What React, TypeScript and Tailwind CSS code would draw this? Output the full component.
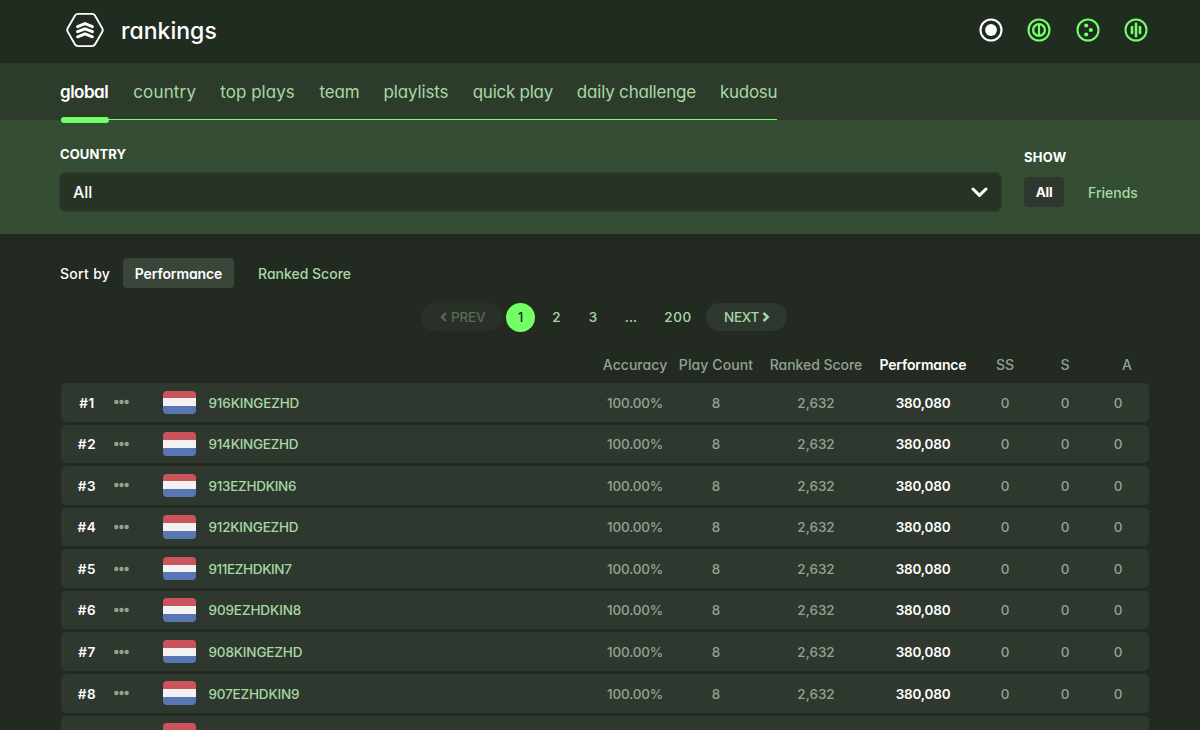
import type { ReactNode } from "react";

const tabs: { label: string; cls: string }[] = [
  { label: "global", cls: "w-[49px] text-white font-semibold tracking-[-0.5px]" },
  { label: "country", cls: "w-[63px] tracking-[0.18px]" },
  { label: "top plays", cls: "w-[75px] tracking-[0.02px]" },
  { label: "team", cls: "w-[40px] tracking-[-0.15px]" },
  { label: "playlists", cls: "w-[65px] tracking-[-0.16px]" },
  { label: "quick play", cls: "w-[80px] tracking-[-0.26px]" },
  { label: "daily challenge", cls: "w-[119px] tracking-[-0.2px]" },
  { label: "kudosu", cls: "w-[57px] tracking-[-0.3px]" },
];

const players: { name: string; cls: string }[] = [
  { name: "916KINGEZHD", cls: "tracking-[-0.16px]" },
  { name: "914KINGEZHD", cls: "tracking-[-0.27px]" },
  { name: "913EZHDKIN6", cls: "tracking-[-0.28px]" },
  { name: "912KINGEZHD", cls: "tracking-[-0.22px]" },
  { name: "911EZHDKIN7", cls: "tracking-[-0.38px]" },
  { name: "909EZHDKIN8", cls: "tracking-[-0.12px]" },
  { name: "908KINGEZHD", cls: "tracking-[-0.16px]" },
  { name: "907EZHDKIN9", cls: "tracking-[-0.19px]" },
];

const columns =
  "grid grid-cols-[52px_50px_435px_74px_88px_112px_102px_62px_58px_48px_6px] w-[1088px] items-center";

function Logo() {
  return (
    <svg width="38" height="36" viewBox="0 0 38 36" fill="none" stroke="#fff" strokeLinejoin="miter">
      <path
        d="M12.2 1.9H25.8Q28 1.9 29.1 3.8L36.2 16.1Q37.3 18 36.2 19.9L29.1 32.2Q28 34.1 25.8 34.1H12.2Q10 34.1 8.9 32.2L1.8 19.9Q.7 18 1.8 16.1L8.9 3.8Q10 1.9 12.2 1.9Z"
        strokeWidth="1.9"
      />
      <path
        d="M11.6 14.6L19 11.7L26.4 14.6M11.6 19.7L19 16.8L26.4 19.7M11.6 24.8L19 21.9L26.4 24.8"
        strokeWidth="3"
        strokeLinecap="round"
      />
    </svg>
  );
}

function Mode({ color, children }: { color: string; children: ReactNode }) {
  return (
    <svg width="24" height="24" viewBox="0 0 24 24" fill={color} stroke={color}>
      <circle cx="12" cy="12" r="10.5" fill="none" strokeWidth="2.1" />
      {children}
    </svg>
  );
}

function Flag() {
  return (
    <div className="flex h-[23.5px] w-[33px] flex-col overflow-hidden rounded-[4px]">
      <div className="flex-1 bg-[#cb535b]" />
      <div className="flex-1 bg-[#f2f2f2]" />
      <div className="flex-1 bg-[#5876b3]" />
    </div>
  );
}

function Row({ rank, name, cls }: { rank: number; name: string; cls: string }) {
  return (
    <div className={`${columns} h-[38.57px] shrink-0 rounded-[5px] bg-[#2f382f] text-center text-[13.5px] font-medium text-[#91a38f]`}>
      <div className="pt-px font-semibold tracking-[0.6px] text-white">#{rank}</div>
      <svg width="17" height="6" viewBox="0 0 17 6" fill="#91a38f">
        <circle cx="3.3" cy="3" r="2.2" />
        <circle cx="8.5" cy="3" r="2.2" />
        <circle cx="13.7" cy="3" r="2.2" />
      </svg>
      <div className="flex items-center gap-[12.5px]">
        <Flag />
        <span className={`pt-px text-[#a6d9a3] ${cls}`}>{name}</span>
      </div>
      <div className="pt-px tracking-[-0.2px]">100.00%</div>
      <div className="pt-px">8</div>
      <div className="pt-px">2,632</div>
      <div className="pt-px font-semibold tracking-[-0.2px] text-white">380,080</div>
      <div className="pt-px">0</div>
      <div className="pt-px">0</div>
      <div className="pt-px">0</div>
    </div>
  );
}

export default function App() {
  return (
    <div className="flex h-[730px] w-[1200px] flex-col overflow-hidden bg-[#232a22] text-white [font-family:Inter,'Liberation_Sans',sans-serif] [font-feature-settings:'cv11']">
      <header className="flex h-[63px] shrink-0 items-center justify-between bg-[#212c21] pr-[52px] pb-[3px] pl-[66px]">
        <div className="flex items-center gap-[17px]">
          <Logo />
          <h1 className="pt-px text-[23px] leading-8 font-[450] tracking-[0.02px]">rankings</h1>
        </div>
        <div className="flex gap-[24.3px] pb-px">
          <Mode color="#ffffff">
            <circle cx="12" cy="12" r="5.9" stroke="none" />
          </Mode>
          <Mode color="#73ff66">
            <circle cx="12" cy="12" r="5.9" fill="none" strokeWidth="2.4" />
            <path d="M12 6.5V17.5" strokeWidth="2.2" />
          </Mode>
          <Mode color="#73ff66">
            <circle cx="10.2" cy="7.5" r="2.1" stroke="none" />
            <circle cx="14.8" cy="12" r="2.1" stroke="none" />
            <circle cx="10.2" cy="16.5" r="2.1" stroke="none" />
          </Mode>
          <Mode color="#73ff66">
            <path d="M12 5.8V18.2M8 9V15M16 9V15" strokeWidth="2.6" strokeLinecap="round" />
          </Mode>
        </div>
      </header>

      <nav className="flex h-[57px] shrink-0 bg-[#2d3b2b] pl-[61px]">
        <div className="relative flex h-[57px] w-[716px] border-b border-[#73ff66] pt-[17px] text-[17px] leading-6 text-[#a6d9a3]">
          <div className="-ml-px flex w-[717px] justify-between">
            {tabs.map((t) => (
              <a key={t.label} className={`whitespace-nowrap ${t.cls}`}>
                {t.label}
              </a>
            ))}
          </div>
          <div className="absolute bottom-[-4px] left-0 h-[6px] w-[48px] rounded-full bg-[#73ff66]" />
        </div>
      </nav>

      <section className="flex h-[114px] shrink-0 bg-[#354d33] pl-[59px]">
        <div className="w-[943px] pt-[24px]">
          <div className="pl-px text-[13px] leading-5 font-bold tracking-[0.1px]">COUNTRY</div>
          <div className="mt-[8px] flex h-[40px] items-center justify-between rounded-[7px] border-2 border-[#2a3a28] bg-[#273325] px-[12px]">
            <span className="text-[16px] font-medium tracking-[-0.1px]">All</span>
            <svg width="17" height="11" viewBox="0 0 17 11" fill="none" stroke="#fff" strokeWidth="3" strokeLinecap="round" strokeLinejoin="round">
              <path d="M2 2L8.5 8.4L15 2" />
            </svg>
          </div>
        </div>
        <div className="pt-[27px] pl-[22px]">
          <div className="text-[13px] leading-5 font-bold tracking-[0.3px]">SHOW</div>
          <div className="mt-[10px] flex h-[30px] items-center gap-6">
            <span className="flex h-[30px] w-[40px] items-center justify-center rounded-[4px] bg-[#2f382f] text-[13.5px] font-bold tracking-[-0.3px]">All</span>
            <span className="text-[14px] font-[450]">
              <span className="text-[#a6d9a3]">Friends</span>
            </span>
          </div>
        </div>
      </section>

      <main className="flex flex-col pl-[61px]">
        <div className="mt-[24px] flex h-[30px] items-center text-[14px]">
          <span className="-ml-px w-[63px] font-medium tracking-[0.3px]">Sort by</span>
          <span className="flex h-[30px] w-[111px] items-center justify-center rounded-[4px] bg-[#3a4639] font-semibold tracking-[-0.1px]">Performance</span>
          <span className="pl-[24px] font-[450] text-[#a6d9a3]">Ranked Score</span>
        </div>

        <div className="mt-[15px] ml-[360px] flex h-[28px] items-center text-[13.5px] font-[450] text-[#a6d9a3]">
          <span className="flex h-[28px] w-[82px] items-center gap-[4px] rounded-full bg-[#283028] pl-[19px] tracking-[-0.2px] text-[#596a57]">
            <svg width="7" height="10" viewBox="0 0 7 10" fill="none" stroke="currentColor" strokeWidth="2.4">
              <path d="M6 1L2 5L6 9" />
            </svg>
            PREV
          </span>
          <span className="ml-[3px] flex size-[29px] items-center justify-center rounded-full bg-[#73ff66] font-medium text-[#232a22]">1</span>
          <span className="w-[43px] text-center">2</span>
          <span className="w-[30px] text-center">3</span>
          <span className="w-[46px] text-center">...</span>
          <span className="w-[48px] text-center tracking-[0.6px]">200</span>
          <span className="ml-[4px] flex h-[28px] w-[81px] items-center gap-[3px] rounded-full bg-[#2f382f] pl-[18px] tracking-[-0.3px]">
            NEXT
            <svg width="8" height="10" viewBox="0 0 8 10" fill="none" stroke="currentColor" strokeWidth="2.4">
              <path d="M1.5 1L5.8 5L1.5 9" />
            </svg>
          </span>
        </div>

        <div className={`${columns} mt-[23px] mb-[8px] h-[21px] text-center text-[14px] font-[450] whitespace-nowrap text-[#91a38f]`}>
          <div className="col-start-4 tracking-[0.05px]">Accuracy</div>
          <div className="tracking-[0.1px]">Play Count</div>
          <div className="tracking-[-0.05px]">Ranked Score</div>
          <div className="font-semibold tracking-[-0.15px] text-white">Performance</div>
          <div>SS</div>
          <div>S</div>
          <div className="pl-[18px]">A</div>
        </div>

        <div className="flex flex-col gap-[3px]">
          {players.map((p, i) => (
            <Row key={p.name} rank={i + 1} name={p.name} cls={p.cls} />
          ))}
          <div className={`${columns} h-[38.57px] shrink-0 rounded-[5px] bg-[#2f382f]`}>
            <div className="col-start-3">
              <Flag />
            </div>
          </div>
        </div>
      </main>
    </div>
  );
}
